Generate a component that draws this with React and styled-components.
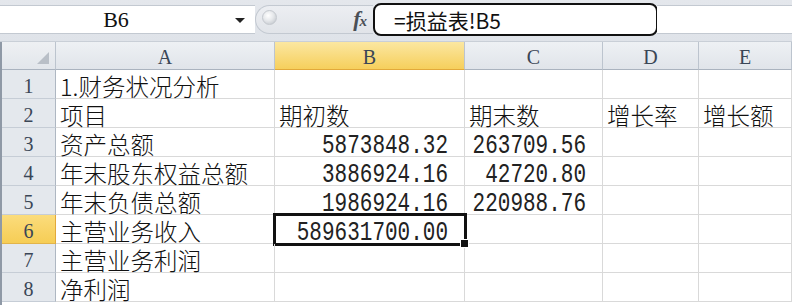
import React from "react";
import styled, { createGlobalStyle, css } from "styled-components";

const Global = createGlobalStyle`
  html, body { margin: 0; padding: 0; background: #ffffff; }
  body { width: 792px; height: 305px; overflow: hidden; }
  * { box-sizing: border-box; }
`;

const CJK = `"Noto Sans CJK SC", "Noto Sans", sans-serif`;
const MONO = `"Liberation Mono", "DejaVu Sans Mono", monospace`;
const SERIF = `"Liberation Serif", "DejaVu Serif", serif`;

const Sheet = styled.div`
  width: 792px;
  height: 305px;
  display: flex;
  flex-direction: column;
  background: #fff;
`;

const FormulaBar = styled.div`
  height: 42px;
  display: flex;
  align-items: stretch;
  padding: 3px 0 5px 0;
  background: linear-gradient(#e4e7ec, #dfe3e9);
  border-bottom: 1px solid #c9cfd7;
`;

const NameBox = styled.div`
  width: 255px;
  margin: 2px 0;
  background: #fff;
  border-top: 1px solid #c3c9d1;
  border-bottom: 1px solid #c3c9d1;
  display: flex;
  align-items: center;
`;

const NameText = styled.span`
  width: 232px;
  text-align: center;
  font-family: ${SERIF};
  font-size: 22px;
  line-height: 26px;
  color: #111;
  padding-top: 1px;
`;

const DropArrow = styled.span`
  width: 0;
  height: 0;
  border-left: 5px solid transparent;
  border-right: 5px solid transparent;
  border-top: 5px solid #222;
  margin-left: 3px;
  margin-top: 2px;
`;

const Splitter = styled.div`
  width: 118px;
  margin: 2px 0;
  background: linear-gradient(#eceef2, #e1e4e9);
  border: 1px solid #c3c9d1;
  border-right: none;
  border-radius: 15px 0 0 15px;
  display: flex;
  align-items: center;
  justify-content: space-between;
  padding: 0 7px 0 6px;
`;

const Knob = styled.span`
  width: 15px;
  height: 15px;
  border-radius: 50%;
  background: radial-gradient(circle at 40% 35%, #ffffff 0%, #e6e8eb 45%, #b9bec5 100%);
  border: 1px solid #c4c8ce;
  margin-top: -4px;
`;

const Fx = styled.span`
  font-family: ${SERIF};
  font-style: italic;
  font-weight: bold;
  color: #4a4f56;
  font-size: 22px;
  line-height: 26px;
  letter-spacing: -1px;
  sub {
    font-size: 15px;
    vertical-align: baseline;
  }
`;

const FormulaInput = styled.div`
  width: 285px;
  background: #fff;
  border: 2.5px solid #111;
  border-radius: 8px;
  display: flex;
  align-items: center;
  padding-left: 19px;
  font-family: ${CJK};
  font-size: 21px;
  line-height: 28px;
  color: #111;
  margin-right: -1px;
`;

const FormulaRest = styled.div`
  flex: 1;
  margin: 2px 0;
  background: #fff;
  border-top: 1px solid #c3c9d1;
  border-bottom: 1px solid #c3c9d1;
`;

const Grid = styled.div`
  flex: 1;
  display: grid;
  grid-template-columns: 54px 219px 190px 138px 96px 1fr;
  grid-template-rows: 28px repeat(8, 29px);
  border-left: 2px solid #8f99a6;
`;

const headerBase = css`
  display: flex;
  align-items: center;
  justify-content: center;
  color: #3a4656;
  line-height: 22px;
  border-right: 1px solid #bcc4ce;
  border-bottom: 1px solid #aab3bf;
`;

const Corner = styled.div`
  ${headerBase};
  background: linear-gradient(#eef0f3, #e2e6eb);
  position: relative;
  &::after {
    content: "";
    position: absolute;
    right: 6px;
    bottom: 5px;
    width: 0;
    height: 0;
    border-left: 12px solid transparent;
    border-bottom: 12px solid #b9bfc7;
  }
`;

const ColHead = styled.div`
  ${headerBase};
  font-family: ${SERIF};
  font-size: 20px;
  padding-top: 2px;
  background: ${(p) =>
    p.$active
      ? "linear-gradient(#fbe7a1, #f6cf5c)"
      : "linear-gradient(#eef1f4, #e0e4ea)"};
  border-bottom-color: ${(p) => (p.$active ? "#e2a93a" : "#aab3bf")};
`;

const RowHead = styled.div`
  ${headerBase};
  font-family: ${SERIF};
  font-size: 20px;
  padding-top: 3px;
  background: ${(p) =>
    p.$active ? "linear-gradient(#fbdc7c, #f6cd55)" : "#e4e8ed"};
  border-bottom-color: ${(p) => (p.$active ? "#e2b44a" : "#c6cdd6")};
  border-right-color: ${(p) => (p.$active ? "#e2a93a" : "#aeb7c2")};
`;

const Cell = styled.div`
  display: flex;
  align-items: flex-end;
  justify-content: ${(p) => (p.$num ? "flex-end" : "flex-start")};
  padding: ${(p) => (p.$num ? "0 16px 0 0" : "0 0 0 4px")};
  border-right: 1px solid #d9d9d9;
  border-bottom: 1px solid #d9d9d9;
  font-family: ${CJK};
  font-size: 23.5px;
  font-weight: 300;
  line-height: 23px;
  color: #111;
  white-space: nowrap;
  position: relative;
  ${(p) =>
    p.$selected &&
    css`
      &::after {
        content: "";
        position: absolute;
        left: -2px;
        top: -2px;
        right: -3px;
        bottom: -3px;
        border: 3px solid #111;
        pointer-events: none;
      }
      &::before {
        content: "";
        position: absolute;
        right: -5px;
        bottom: -5px;
        width: 7px;
        height: 7px;
        background: #111;
        border: 1px solid #fff;
        z-index: 2;
      }
    `}
`;

const NumText = styled.span`
  display: inline-block;
  font-family: ${MONO};
  font-size: 21px;
  font-weight: 400;
  line-height: 14px;
  color: #222;
  transform: scaleY(1.3);
  transform-origin: 50% 100%;
`;

const columns = ["A", "B", "C", "D", "E"];

const rows = [
  ["1.财务状况分析", "", "", "", ""],
  ["项目", "期初数", "期末数", "增长率", "增长额"],
  ["资产总额", "5873848.32", "263709.56", "", ""],
  ["年末股东权益总额", "3886924.16", "42720.80", "", ""],
  ["年末负债总额", "1986924.16", "220988.76", "", ""],
  ["主营业务收入", "589631700.00", "", "", ""],
  ["主营业务利润", "", "", "", ""],
  ["净利润", "", "", "", ""],
];

const isNum = (v) => /^[0-9.]+$/.test(v) && v.length > 0;

export default function App() {
  return (
    <>
      <Global />
      <Sheet>
        <FormulaBar>
          <NameBox>
            <NameText>B6</NameText>
            <DropArrow />
          </NameBox>
          <Splitter>
            <Knob />
            <Fx>
              f<sub>x</sub>
            </Fx>
          </Splitter>
          <FormulaInput>=损益表!B5</FormulaInput>
          <FormulaRest />
        </FormulaBar>
        <Grid>
          <Corner />
          {columns.map((c) => (
            <ColHead key={c} $active={c === "B"}>
              {c}
            </ColHead>
          ))}
          {rows.map((r, i) => (
            <React.Fragment key={i}>
              <RowHead $active={i === 5}>{i + 1}</RowHead>
              {r.map((v, j) => {
                const num = isNum(v);
                return (
                  <Cell key={j} $num={num} $selected={i === 5 && j === 1}>
                    {num ? <NumText>{v}</NumText> : v}
                  </Cell>
                );
              })}
            </React.Fragment>
          ))}
        </Grid>
      </Sheet>
    </>
  );
}
